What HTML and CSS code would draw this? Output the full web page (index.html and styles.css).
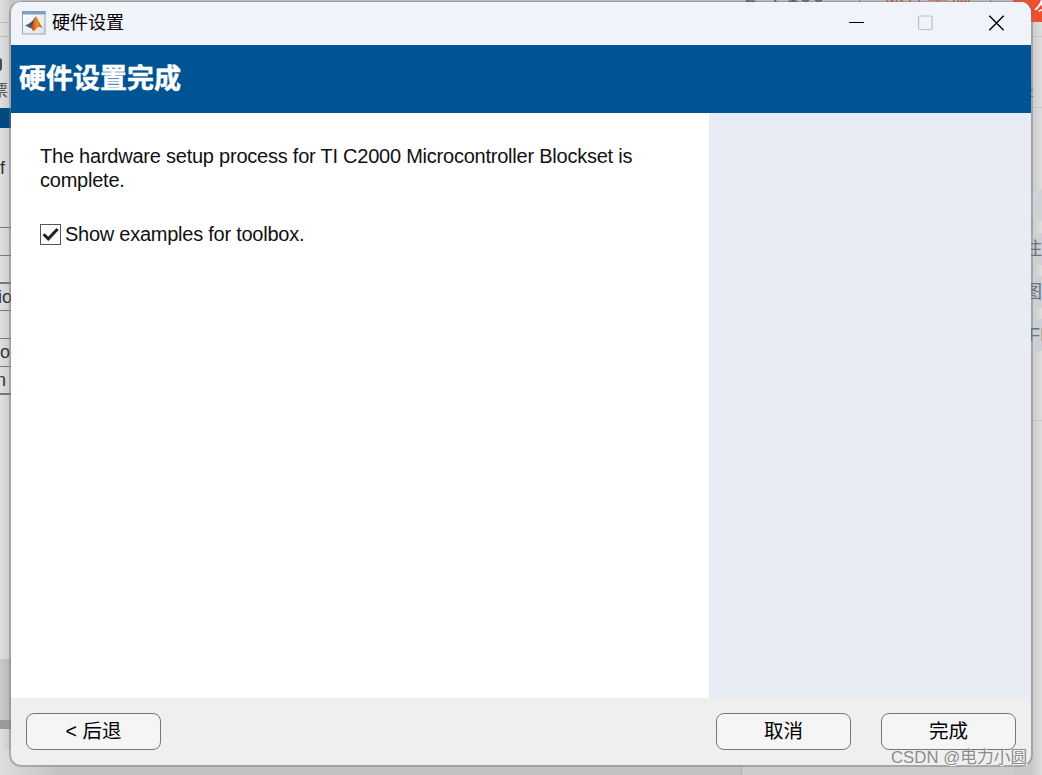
FILE: index.html
```html
<!DOCTYPE html>
<html lang="zh-CN">
<head>
<meta charset="UTF-8">
<title>硬件设置</title>
<link rel="stylesheet" href="styles.css">
</head>
<body>

	<div class="desktop">

		<!-- 后面的窗口 -->
		<div class="back back-top">
			<span class="t1">2 小100</span>
			<span class="t2">保存草稿</span>
			<i class="sep s1"></i><i class="sep s2"></i>
		</div>
		<div class="back back-left">
			<div class="tab"></div>
			<span class="ticket">票</span>
			<div class="bar"></div>
			<span class="txt x1">f t</span>
			<span class="txt x2">io</span>
			<span class="txt x3">or</span>
			<span class="txt x4">n T</span>
			<i class="line l0"></i>
			<i class="line l00"></i>
			<i class="line l1"></i>
			<i class="line l2"></i>
			<i class="line l3"></i>
			<i class="line l4"></i>
			<i class="line l5"></i>
			<i class="line l6"></i>
			<i class="line l7"></i>
			<div class="status"></div>
		</div>
		<div class="back back-right">
			<div class="publish">发</div>
			<i class="rule r1"></i>
			<i class="rule r2"></i>
			<span class="save">录</span>
			<div class="avatar"></div>
			<span class="chip c1">注</span>
			<span class="chip c2">图</span>
			<span class="chip c3">FI</span>
			<i class="rule r3"></i>
		</div>
		<div class="back back-bottom"></div>

		<div class="window">
			<div class="titlebar">
				<svg class="logo" width="24" height="24" viewBox="0 0 24 24">
					<defs>
						<linearGradient id="frame" x1="0" y1="0" x2="1" y2="1">
							<stop offset="0" stop-color="#fff"/>
							<stop offset="1" stop-color="#dde3e8"/>
						</linearGradient>
						<linearGradient id="peak" x1="0" y1="0" x2="1" y2="0">
							<stop offset="0" stop-color="#8e2a16"/>
							<stop offset="0.4" stop-color="#e8701f"/>
							<stop offset="0.6" stop-color="#ef8a2a"/>
							<stop offset="1" stop-color="#b23a18"/>
						</linearGradient>
					</defs>
					<rect x="0.5" y="0.5" width="22.5" height="22.5" fill="url(#frame)" stroke="#9aa5ad"/>
					<rect x="0" y="0" width="23.5" height="3.5" fill="#7ba0c4"/>
					<path d="M2.8 14.6 L8 12 L11 9.5 L13.5 5.5 L11 14 L8 17.2 L6 15.8 Z" fill="#3a76a8"/>
					<path d="M8 12.5 L11 9.5 L13.5 5.5 L10.5 13.5 L7.5 16.8 L6 15.6 Z" fill="#554454"/>
					<path d="M13.8 5.2 C15.8 6.5 17.5 13 21 17.5 C18 15.5 16.3 15.6 14.8 17.2 C13.2 19 12.2 20 11 20 C10.3 18 9.5 17 7.7 16.8 C11 15 12 9 13.8 5.2 Z" fill="url(#peak)"/>
				</svg>
				<span class="caption">硬件设置</span>
				<svg class="controls" width="156" height="16" viewBox="0 0 156 16">
					<path d="M0 7.5 H15" stroke="#000" fill="none"/>
					<rect x="69.5" y="1" width="13.5" height="13.5" rx="1.5" fill="none" stroke="#bfc0c4" stroke-width="1.2"/>
					<path d="M140.3 0.8 L154.7 15.2 M154.7 0.8 L140.3 15.2" stroke="#000" stroke-width="1.4" fill="none"/>
				</svg>
			</div>
			<h1 class="header">硬件设置完成</h1>
			<div class="content">
				<div class="main">
					<p class="message">The hardware setup process for TI C2000 Microcontroller Blockset is complete.</p>
					<div class="option">
						<svg class="check" width="21" height="21" viewBox="0 0 21 21">
							<rect x="0.5" y="0.5" width="20" height="20" fill="#fff" stroke="#555"/>
							<path d="M3.6 10.2 L8.3 14.8 L17.6 5" stroke="#222" stroke-width="3" fill="none"/>
						</svg>
						<span class="option-text">Show examples for toolbox.</span>
					</div>
				</div>
				<div class="side"></div>
			</div>
			<div class="footer">
				<button class="btn btn-back">&lt; 后退</button>
				<button class="btn">取消</button>
				<button class="btn">完成</button>
			</div>
		</div>

		<div class="watermark">CSDN @电力小圆</div>
	</div>

</body>
</html>
```
FILE: styles.css
```css
* {
	box-sizing: border-box;
}

body {
	margin: 0;
	font-family: "Liberation Sans", "Noto Sans CJK SC", sans-serif;
}

.desktop {
	position: relative;
	width: 1042px;
	height: 775px;
	overflow: hidden;
	background: #ccc;
}

/* 后面的窗口 */
.back {
	position: absolute;
	overflow: hidden;
}
.back > * {
	position: absolute;
}

.back-top {
	left: 0;
	top: 0;
	width: 1042px;
	height: 12px;
	background: #bbb;
}
.t1, .t2 {
	top: -17px;
	font-size: 20px;
	line-height: 24px;
	white-space: nowrap;
	color: #555;
}
.t1 { left: 745px; letter-spacing: 1.8px; }
.t2 { left: 883px; font-size: 22px; color: #c65b4c; }
.sep {
	top: 0;
	width: 1px;
	height: 3px;
	background: #c65b4c;
}
.s1 { left: 859px; }
.s2 { left: 990px; }

.back-left {
	left: 0;
	top: 0;
	width: 22px;
	height: 775px;
	background: linear-gradient(to right, #e0e0e0, #c6c6c6 12px);
}
.tab {
	left: -8px;
	top: 58px;
	width: 10px;
	height: 13px;
	border: 2px solid #444a60;
	border-radius: 3px;
}
.ticket {
	left: -8px;
	top: 81px;
	font-size: 16px;
	line-height: 20px;
	color: #555;
}
.bar {
	left: 0;
	top: 108px;
	width: 22px;
	height: 20px;
	background: #004a80;
}
.txt {
	font-size: 18px;
	line-height: 20px;
	white-space: nowrap;
	color: #333;
}
.x1 { left: 0; top: 158px; letter-spacing: 0.5px; }
.x2 { left: -2px; top: 287px; }
.x3 { left: 0; top: 342px; }
.x4 { left: -4px; top: 370px; }
.line {
	left: 0;
	width: 22px;
	height: 1px;
	background: #777;
}
.l0 { top: 22px; background: #bbb; }
.l00 { top: 36px; background: #bbb; }
.l1 { top: 227px; }
.l2 { top: 255px; }
.l3 { top: 282px; height: 2px; }
.l4 { top: 310px; }
.l5 { top: 338px; }
.l6 { top: 366px; }
.l7 { top: 393px; height: 2px; }
.status {
	left: 0;
	top: 659px;
	width: 22px;
	height: 70px;
	border-bottom: 9px solid #999;
	background: linear-gradient(to right, #cacaca, #b5b5b5 12px);
}

.back-right {
	left: 1013px;
	top: 0;
	width: 29px;
	height: 775px;
	background: linear-gradient(to right, #c8c8c8 18px, #dedede);
}
.publish {
	left: 0;
	top: 0;
	width: 29px;
	height: 22px;
	padding-left: 21px;
	font-size: 18px;
	line-height: 8px;
	color: #fff;
	background: #ee4f2d;
}
.rule {
	left: 18px;
	width: 11px;
	height: 1px;
	background: #c4c4c4;
}
.r1 { top: 36px; }
.r2 { top: 107px; }
.r3 { top: 420px; }
.save {
	left: 5px;
	top: 81px;
	font-size: 16px;
	line-height: 20px;
	color: #666;
}
.avatar {
	left: 15px;
	top: 189px;
	width: 32px;
	height: 32px;
	border-radius: 50%;
	background: #cfd2d6;
}
.chip {
	left: 0;
	width: 29px;
	height: 32px;
	padding-left: 11px;
	font-size: 18px;
	line-height: 32px;
	white-space: nowrap;
	color: #6a6f84;
	background: #cccfd3;
}
.c1 { top: 233px; }
.c2 { top: 276px; }
.c3 { top: 319px; padding-left: 16px; }

.back-bottom {
	left: 0;
	top: 750px;
	width: 742px;
	height: 25px;
	border-right: 1px solid #b3b3b3;
	background: linear-gradient(to right, #dedede, #c2c2c2 60px);
}

/* 对话框 */
.window {
	position: absolute;
	left: 9px;
	top: 1px;
	display: flex;
	flex-direction: column;
	width: 1024px;
	height: 766px;
	border: 2px solid rgba(120, 120, 120, 0.45);
	border-top-width: 1px;
	border-radius: 12px;
	background: #efefef;
	background-clip: padding-box;
	overflow: hidden;
}

.titlebar {
	display: flex;
	align-items: center;
	flex: none;
	height: 43px;
	padding: 0 26px 2px 11px;
	background: #f0f3fa;
}
.caption {
	flex: 1;
	margin-left: 6px;
	padding-top: 1px;
	font-size: 18px;
	line-height: 24px;
	color: #000;
}

.header {
	flex: none;
	height: 68px;
	margin: 0;
	padding-left: 8px;
	font-size: 27px;
	line-height: 68px;
	color: #fff;
	-webkit-text-stroke: 0.5px #fff;
	background: #005493;
}

.content {
	display: flex;
	flex: none;
	height: 585px;
}
.main {
	width: 698px;
	padding: 31px 70px 0 29px;
	background: #fff;
}
.side {
	flex: 1;
	background: #e7ecf5;
}
.message {
	margin: 0;
	font-size: 20px;
	line-height: 24px;
	letter-spacing: -0.23px;
	color: #111;
}
.option {
	display: flex;
	align-items: center;
	margin-top: 30px;
	font-size: 20px;
	line-height: 24px;
	letter-spacing: -0.25px;
	color: #111;
}
.option-text {
	margin-left: 4px;
}

.footer {
	display: flex;
	gap: 30px;
	padding: 15px;
}
.btn {
	width: 135px;
	height: 37px;
	padding: 0 0 2px;
	border: 1px solid #777;
	border-radius: 8px;
	font-family: inherit;
	font-size: 19.5px;
	line-height: 24px;
	color: #000;
	background: #f5f5f5;
}
.btn-back {
	margin-right: auto;
}

.watermark {
	position: absolute;
	left: 891px;
	top: 746px;
	font-size: 16.8px;
	line-height: 24px;
	white-space: nowrap;
	color: #8c8c8c;
	text-shadow: 1px 1px 0 #f4f4f4;
}
```
